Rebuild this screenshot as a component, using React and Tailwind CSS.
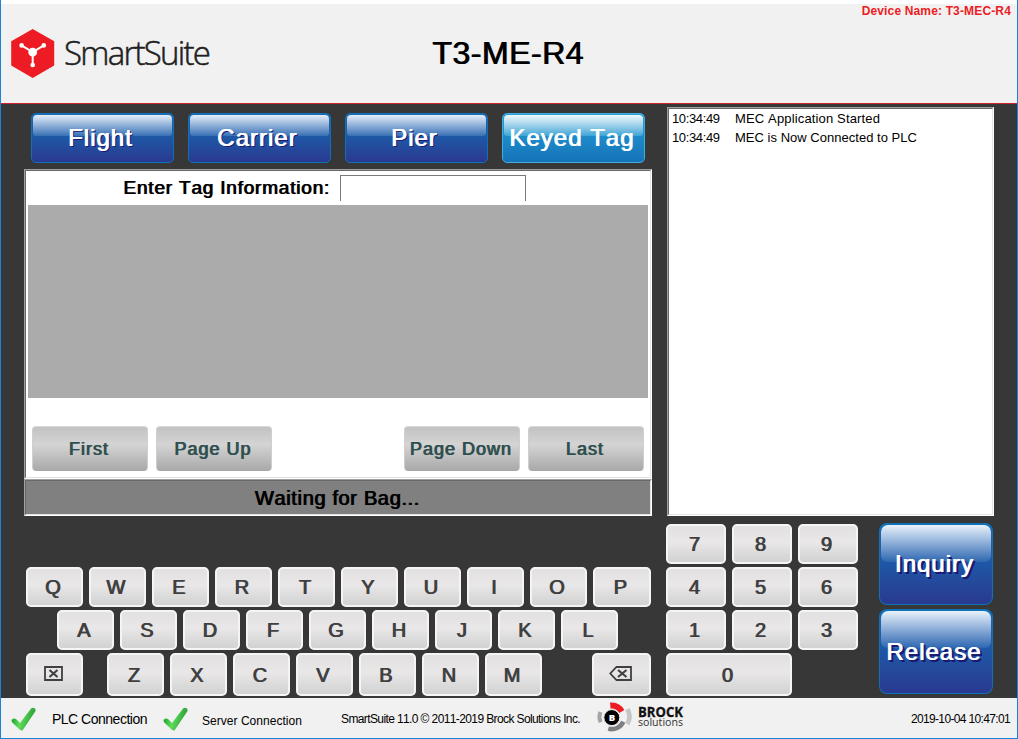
const fauxBold = "tracking-[1px] [text-shadow:1px_0_0_currentColor]";

function TabButton({ label, active }) {
  return (
    <button
      className={
        "flex h-[50px] w-[143px] flex-col rounded-[5px] border p-px " +
        (active
          ? "border-[#41aee0] bg-linear-to-b from-[#27a0d8] to-[#1573b8]"
          : "border-[#0f72b8] bg-linear-to-b from-[#1b68b4] via-[#1e56a5] to-[#293990]")
      }
    >
      <span
        className={
          "h-[21px] w-full shrink-0 rounded-t-[4px] rounded-b-[3px] bg-linear-to-b " +
          (active ? "from-[#f0fafd] to-[#38a5d6]" : "from-[#e6eff8] to-[#3870b4]")
        }
      />
      <span
        className={
          "-mt-[12px] w-full text-center text-[24px] leading-[27px] tracking-[1px] whitespace-nowrap text-white " +
          (active
            ? "pr-[4px] [text-shadow:1px_0_0_#fff]"
            : "pr-[5px] [text-shadow:1px_0_0_#fff,2px_1px_0_#191970]")
        }
      >
        {label}
      </span>
    </button>
  );
}

function ActionButton({ label, className, labelClass }) {
  return (
    <button
      className={
        "flex w-[114px] flex-col rounded-[8px] border border-t-2 border-[#0f72b8] bg-linear-to-b from-[#1b68b4] via-[#1e56a5] to-[#293990] px-px " +
        className
      }
    >
      <span className="h-[37px] w-full shrink-0 rounded-t-[7px] rounded-b-[6px] bg-linear-to-b from-[#e9f2fa] to-[#2d67b0]" />
      <span
        className={
          "w-full text-center text-[24px] leading-[28px] tracking-[1px] text-white [text-shadow:1px_0_0_#fff,2px_2px_0_#191970,3px_2px_0_#191970] " +
          labelClass
        }
      >
        {label}
      </span>
    </button>
  );
}

function PageButton({ label, className = "" }) {
  return (
    <button
      className={
        "h-[45px] w-[116px] rounded-[4px] border border-b-0 border-t-[#d8d8d8] border-x-[#cfcfcf] bg-linear-to-b from-[#c2c2c2] via-[#d4d4d4] via-40% to-[#a8a8a8] pr-[3px] text-[18px] whitespace-nowrap text-[#2f4f4f] " +
        fauxBold +
        " " +
        className
      }
    >
      {label}
    </button>
  );
}

function Key({ children, className = "h-[40px] w-[57px]" }) {
  return (
    <button
      className={
        "flex items-center justify-center rounded-[5px] border-2 border-[#f6f5f6] bg-linear-to-b from-[#e2e0e1] via-[#e9e7e8] via-45% to-[#d2d2d2] pr-[3px] text-[20px] leading-none text-[#404040] " +
        fauxBold +
        " " +
        className
      }
    >
      {children}
    </button>
  );
}

function Check() {
  return (
    <svg width="25" height="24" viewBox="0 0 25 24" className="shrink-0">
      <defs>
        <linearGradient id="tick" x1="0" y1="0" x2="1" y2="0.2">
          <stop offset="0" stopColor="#0b8f1c" />
          <stop offset="0.45" stopColor="#5fdc5c" />
          <stop offset="1" stopColor="#2b9f35" />
        </linearGradient>
      </defs>
      <path
        d="M1 12.6 Q3 10.6 5 12 L9 16 L20 1.6 Q21.8 -0.2 24 1.6 Q25 3 24.2 4.5 L11.8 23 Q10.4 24.2 8.8 22.8 L1.3 15.5 Q0 14 1 12.6Z"
        fill="url(#tick)"
      />
    </svg>
  );
}

function SmartSuiteLogo() {
  return (
    <svg width="230" height="60" viewBox="0 0 230 60">
      <path d="M21.7 2 L43.2 14.2 V38.6 L21.7 51 L0.2 38.6 V14.2Z" fill="#ed1c24" />
      <g stroke="#fff" strokeWidth="2" fill="#fff">
        <path d="M10.5 18.4 L21.7 25 L32.9 18.4 M21.7 25 V38" fill="none" />
        <circle cx="21.7" cy="25.2" r="3.4" />
        <circle cx="10.6" cy="18.4" r="1.3" />
        <circle cx="32.8" cy="18.4" r="1.3" />
        <circle cx="21.7" cy="38" r="1.3" />
      </g>
      <text
        x="53"
        y="38.2"
        textLength="147"
        lengthAdjust="spacing"
        fill="#202020"
        fontSize="33"
        fontWeight="300"
        fontFamily="'Open Sans', sans-serif"
        stroke="#202020"
        strokeWidth="0.5"
      >
        SmartSuite
      </text>
    </svg>
  );
}

function BrockLogo() {
  return (
    <svg width="90" height="32" viewBox="0 0 90 32">
      <g fill="none" strokeWidth="4.6">
        <path d="M14.3 3.6 A12 12 0 0 1 25.8 9.6" stroke="#ed1c24" strokeWidth="6" />
        <path d="M31.5 7.2 A15 15 0 0 1 31.3 22" stroke="#c3c5c7" />
        <path d="M27.3 19.8 A12.6 12.6 0 0 1 12.3 26.6" stroke="#7d7f82" />
        <path d="M4.6 20.2 A13 13 0 0 1 4.4 10" stroke="#a3a5a8" strokeWidth="4" />
      </g>
      <circle cx="15.8" cy="15.6" r="8" fill="#000" stroke="#f1f1f1" strokeWidth="1" />
      <text x="16" y="19.2" textAnchor="middle" fontSize="9.5" fontWeight="800" fill="#fff" fontFamily="'Open Sans', sans-serif">
        B
      </text>
      <text x="42" y="14.8" textLength="45" lengthAdjust="spacingAndGlyphs" fontSize="13.5" fontWeight="700" fill="#111" stroke="#111" strokeWidth="0.3" fontFamily="'Open Sans', sans-serif">
        BROCK
      </text>
      <text x="42" y="23.8" textLength="45" lengthAdjust="spacingAndGlyphs" fontSize="11" fill="#333" fontFamily="'Open Sans', sans-serif">
        solutions
      </text>
    </svg>
  );
}

const sunken =
  "border border-t-[#a0a0a0] border-l-[#a0a0a0] border-r-white border-b-white";
const sunkenInner =
  "border border-t-[#696969] border-l-[#696969] border-r-[#e3e3e3] border-b-[#e3e3e3]";

const log = [
  ["10:34:49", "MEC Application Started", "tracking-[0.15px]"],
  ["10:34:49", "MEC is Now Connected to PLC", "tracking-[0.02px]"],
];

export default function App() {
  return (
    <div className="flex h-[739px] w-[1018px] flex-col overflow-hidden border-x border-b border-[#1883d7] bg-[#373737] font-['Liberation_Sans',Arial,sans-serif] text-black [font-kerning:none]">
      <header className="flex h-[104px] shrink-0 items-start border-t-4 border-b border-t-white border-b-[#d0202c] bg-[#f1f1f1]">
        <div className="w-[431px] pt-[23px] pl-[10px]">
          <SmartSuiteLogo />
        </div>
        <h1 className="w-[180px] pt-[31px] text-[32px] leading-[36px] tracking-[0.5px] whitespace-nowrap [text-shadow:1px_0_0_currentColor]">
          T3-ME-R4
        </h1>
        <div className="flex-1 pr-[6px] text-right text-[12px] leading-[14px] font-bold tracking-[0.15px] text-[#ed1c24]">
          Device Name: T3-MEC-R4
        </div>
      </header>

      <main className="flex flex-1 pl-[23px]">
        <section className="w-[642px] shrink-0 pt-[9px]">
          <div className="flex gap-[14px] pl-[7px]">
            <TabButton label="Flight" />
            <TabButton label="Carrier" />
            <TabButton label="Pier" />
            <TabButton label="Keyed Tag" active />
          </div>

          <div className={"mt-[6px] h-[310px] w-[628px] " + sunken}>
            <div className={"h-full bg-white px-[2px] " + sunkenInner}>
              <div className="flex h-[34px] pt-[4px]">
                <label className="w-[312px] pl-[95px] text-[19px] leading-[26px] tracking-[0.8px] whitespace-nowrap [text-shadow:1px_0_0_currentColor]">
                  Enter Tag Information:
                </label>
                <div className="h-[26px] w-[186px] border border-b-0 border-[#7a7a7a] bg-white" />
              </div>
              <div className="h-[193px] bg-[#ababab]" />
              <div className="flex gap-[8px] px-[4px] pt-[28px]">
                <PageButton label="First" />
                <PageButton label="Page Up" />
                <PageButton label="Page Down" className="ml-auto" />
                <PageButton label="Last" />
              </div>
            </div>
          </div>
          <div className={"h-[37px] w-[628px] " + sunken}>
            <div
              className={
                "flex h-full items-center justify-center bg-[#808080] pr-[2px] text-[20px] tracking-[0.65px] [text-shadow:1px_0_0_currentColor] " +
                sunkenInner
              }
            >
              Waiting for Bag...
            </div>
          </div>

          <div className="mt-[51px] flex flex-col gap-[3px] pl-[2px]">
            <div className="flex gap-[6px]">
              {"QWERTYUIO".split("").map((k) => (
                <Key key={k}>{k}</Key>
              ))}
              <Key className="h-[40px] w-[58px]">P</Key>
            </div>
            <div className="flex gap-[6px] pl-[31px]">
              {"ASDFGHJKL".split("").map((k) => (
                <Key key={k}>{k}</Key>
              ))}
            </div>
            <div className="flex gap-[6px]">
              <Key className="mr-[18px] h-[43px] w-[57px]">
                <svg width="19" height="15" viewBox="0 0 19 15" fill="none" stroke="#404040" className="mb-[2px] shrink-0">
                  <path d="M1 1 H18 V14 H1Z" strokeWidth="1.8" />
                  <path d="M5.5 4 L13.5 11 M13.5 4 L5.5 11" strokeWidth="2.1" />
                </svg>
              </Key>
              {"ZXCVBNM".split("").map((k) => (
                <Key key={k} className="h-[43px] w-[57px]">
                  {k}
                </Key>
              ))}
              <Key className="ml-[44px] h-[43px] w-[59px]">
                <svg width="23" height="15" viewBox="0 0 23 15" fill="none" stroke="#404040" className="mb-[2px] shrink-0">
                  <path d="M7.5 1 H22 V14 H7.5 L1.3 7.5Z" strokeWidth="1.8" />
                  <path d="M9 4 L17.5 11 M17.5 4 L9 11" strokeWidth="2.1" />
                </svg>
              </Key>
            </div>
          </div>
        </section>

        <section className="flex-1 pt-[3px]">
          <div className={"ml-px h-[409px] w-[327px] " + sunken}>
            <div className={"h-full bg-white pl-[3px] " + sunkenInner}>
              {log.map(([time, text, tracking]) => (
                <div key={text} className="flex h-[19px] items-center text-[13px] whitespace-nowrap">
                  <span className="w-[63px] tracking-[-0.36px]">{time}</span>
                  <span className={tracking}>{text}</span>
                </div>
              ))}
            </div>
          </div>
          <div className="mt-[7px] flex">
            <div className="mt-px flex w-[213px] flex-col gap-[3px]">
              {["789", "456", "123"].map((row) => (
                <div key={row} className="flex gap-[6px]">
                  {row.split("").map((k) => (
                    <Key key={k} className="h-[40px] w-[60px]">
                      {k}
                    </Key>
                  ))}
                </div>
              ))}
              <Key className="h-[43px] w-[126px]">0</Key>
            </div>
            <div className="flex flex-col gap-[4px]">
              <ActionButton label="Inquiry" className="h-[82px]" labelClass="-mt-[12px] pr-[4px]" />
              <ActionButton label="Release" className="h-[85px]" labelClass="-mt-[10px] pr-[5px]" />
            </div>
          </div>
        </section>
      </main>

      <footer className="flex h-[40px] shrink-0 items-start bg-[#f1f1f1] whitespace-nowrap">
        <div className="flex w-[152px] pt-[9px] pl-[10px]">
          <Check />
          <span className="pl-[16px] text-[14px] leading-[24px] tracking-[-0.5px]">PLC Connection</span>
        </div>
        <div className="flex w-[188px] pt-[9px] pl-[10px]">
          <Check />
          <span className="pt-[2px] pl-[14px] text-[12px] leading-[24px] tracking-[0.03px]">Server Connection</span>
        </div>
        <span className="w-[255px] pt-[9px] text-[12px] leading-[24px] tracking-[-0.61px]">
          SmartSuite 11.0 © 2011-2019 Brock Solutions Inc.
        </span>
        <div className="pt-[4px]">
          <BrockLogo />
        </div>
        <span className="ml-auto pt-[9px] pr-[7px] text-[12px] leading-[24px] tracking-[-0.65px]">
          2019-10-04 10:47:01
        </span>
      </footer>
    </div>
  );
}
